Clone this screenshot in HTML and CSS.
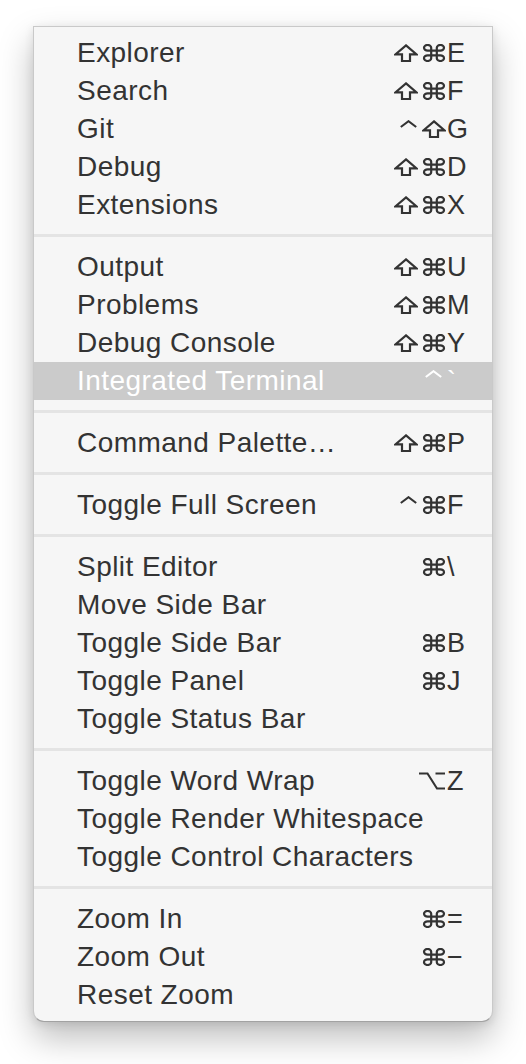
FILE: index.html
```html
<!DOCTYPE html>
<html>
<head>
<meta charset="utf-8">
<link rel="stylesheet" href="styles.css">
</head>
<body>
<svg class="defs" width="0" height="0" aria-hidden="true">
  <symbol id="i-shift" viewBox="0 0 24 18"><polygon points="12,1.4 22.6,10.4 16,10.4 16,17 8,17 8,10.4 1.4,10.4" fill="none" stroke="currentColor" stroke-width="2.2"/></symbol>
  <symbol id="i-cmd" viewBox="0 0 24 18"><path d="M9.2 14.2V3.8A3.6 2.8 0 1 0 5.6 6.6H18.4A3.6 2.8 0 1 0 14.8 3.8V14.2A3.6 2.8 0 1 0 18.4 11.4H5.6A3.6 2.8 0 1 0 9.2 14.2Z" fill="none" stroke="currentColor" stroke-width="2.2"/></symbol>
  <symbol id="i-ctrl" viewBox="0 0 20 18"><polyline points="2.8,7 10.5,1.2 18.2,7" fill="none" stroke="currentColor" stroke-width="2.1"/></symbol>
  <symbol id="i-opt" viewBox="0 0 28 18"><path d="M1 1.5H9.5L19 16.5H27M17.5 1.5H27" fill="none" stroke="currentColor" stroke-width="2.1"/></symbol>
</svg>

<div class="menu">
  <div class="item"><span class="label">Explorer</span><span class="mods"><svg class="m w24"><use href="#i-shift"/></svg><svg class="m w24"><use href="#i-cmd"/></svg></span><span class="key">E</span></div>
  <div class="item"><span class="label">Search</span><span class="mods"><svg class="m w24"><use href="#i-shift"/></svg><svg class="m w24"><use href="#i-cmd"/></svg></span><span class="key">F</span></div>
  <div class="item"><span class="label">Git</span><span class="mods"><svg class="m w20"><use href="#i-ctrl"/></svg><svg class="m w24"><use href="#i-shift"/></svg></span><span class="key">G</span></div>
  <div class="item"><span class="label">Debug</span><span class="mods"><svg class="m w24"><use href="#i-shift"/></svg><svg class="m w24"><use href="#i-cmd"/></svg></span><span class="key">D</span></div>
  <div class="item"><span class="label">Extensions</span><span class="mods"><svg class="m w24"><use href="#i-shift"/></svg><svg class="m w24"><use href="#i-cmd"/></svg></span><span class="key">X</span></div>
  <div class="sep"></div>
  <div class="item"><span class="label">Output</span><span class="mods"><svg class="m w24"><use href="#i-shift"/></svg><svg class="m w24"><use href="#i-cmd"/></svg></span><span class="key">U</span></div>
  <div class="item"><span class="label">Problems</span><span class="mods"><svg class="m w24"><use href="#i-shift"/></svg><svg class="m w24"><use href="#i-cmd"/></svg></span><span class="key">M</span></div>
  <div class="item"><span class="label">Debug Console</span><span class="mods"><svg class="m w24"><use href="#i-shift"/></svg><svg class="m w24"><use href="#i-cmd"/></svg></span><span class="key">Y</span></div>
  <div class="item selected"><span class="label">Integrated Terminal</span><span class="mods"><svg class="m w20 ctl-end"><use href="#i-ctrl"/></svg></span><span class="key">`</span></div>
  <div class="sep"></div>
  <div class="item"><span class="label">Command Palette…</span><span class="mods"><svg class="m w24"><use href="#i-shift"/></svg><svg class="m w24"><use href="#i-cmd"/></svg></span><span class="key">P</span></div>
  <div class="sep"></div>
  <div class="item"><span class="label">Toggle Full Screen</span><span class="mods"><svg class="m w20"><use href="#i-ctrl"/></svg><svg class="m w24"><use href="#i-cmd"/></svg></span><span class="key">F</span></div>
  <div class="sep"></div>
  <div class="item"><span class="label">Split Editor</span><span class="mods"><svg class="m w24"><use href="#i-cmd"/></svg></span><span class="key">\</span></div>
  <div class="item"><span class="label">Move Side Bar</span><span class="mods"></span><span class="key"></span></div>
  <div class="item"><span class="label">Toggle Side Bar</span><span class="mods"><svg class="m w24"><use href="#i-cmd"/></svg></span><span class="key">B</span></div>
  <div class="item"><span class="label">Toggle Panel</span><span class="mods"><svg class="m w24"><use href="#i-cmd"/></svg></span><span class="key">J</span></div>
  <div class="item"><span class="label">Toggle Status Bar</span><span class="mods"></span><span class="key"></span></div>
  <div class="sep"></div>
  <div class="item"><span class="label">Toggle Word Wrap</span><span class="mods"><svg class="m w28"><use href="#i-opt"/></svg></span><span class="key">Z</span></div>
  <div class="item"><span class="label">Toggle Render Whitespace</span><span class="mods"></span><span class="key"></span></div>
  <div class="item"><span class="label">Toggle Control Characters</span><span class="mods"></span><span class="key"></span></div>
  <div class="sep"></div>
  <div class="item"><span class="label">Zoom In</span><span class="mods"><svg class="m w24"><use href="#i-cmd"/></svg></span><span class="key">=</span></div>
  <div class="item"><span class="label">Zoom Out</span><span class="mods"><svg class="m w24"><use href="#i-cmd"/></svg></span><span class="key">−</span></div>
  <div class="item"><span class="label">Reset Zoom</span><span class="mods"></span><span class="key"></span></div>
</div>
</body>
</html>
```

FILE: styles.css
```css
html, body {
  margin: 0;
  padding: 0;
  background: #ffffff;
}

body {
  font-family: "Liberation Sans", Arial, sans-serif;
  color: #333333;
  padding: 26px 0 42px 33px;
}

.defs {
  position: absolute;
  width: 0;
  height: 0;
  overflow: hidden;
}

.menu {
  box-sizing: border-box;
  width: 460px;
  padding: 7px 0;
  background: #f6f6f6;
  border: 1px solid rgba(0, 0, 0, 0.18);
  border-bottom-color: rgba(0, 0, 0, 0.34);
  border-radius: 0 0 11px 11px;
  box-shadow: 0 16px 34px rgba(0, 0, 0, 0.26), 0 2px 10px rgba(0, 0, 0, 0.1);
}

.item {
  display: grid;
  grid-template-columns: 1fr auto 45px;
  height: 38px;
  line-height: 38px;
  padding-left: 43px;
}

.item.selected {
  background: #cbcbcb;
  color: #ffffff;
}

.label {
  font-size: 28px;
  letter-spacing: 0.45px;
  white-space: nowrap;
}

.mods {
  display: flex;
  justify-content: flex-end;
  align-items: flex-start;
  gap: 4px;
  padding-top: 10px;
  margin-right: 1px;
}

.m {
  display: block;
  height: 18px;
  color: inherit;
}

.w20 { width: 20px; }
.w24 { width: 24px; }
.w28 { width: 28px; }

.ctl-end {
  margin-right: 3px;
  margin-top: -2px;
}

.key {
  font-size: 27px;
  white-space: nowrap;
}

.sep {
  height: 3px;
  margin: 10px 0 11px;
  background: #e4e4e4;
}
```
